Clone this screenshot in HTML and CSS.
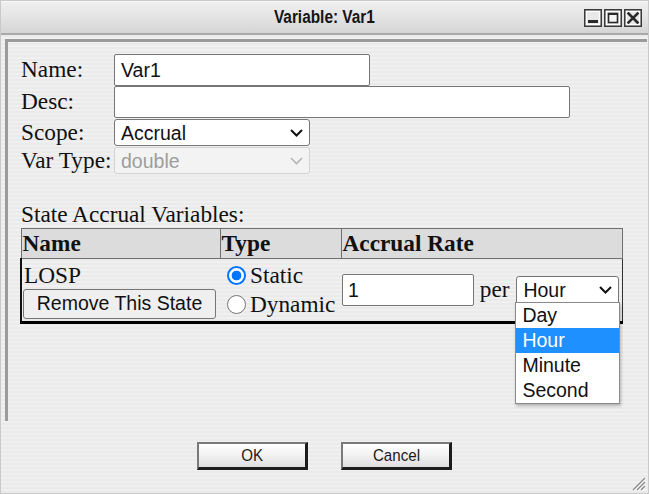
FILE: index.html
```html
<!DOCTYPE html>
<html>
<head>
<meta charset="utf-8">
<link rel="stylesheet" href="styles.css">
</head>
<body>
<div class="window">
  <div class="titlebar">
    <span></span>
    <span class="title">Variable: Var1</span>
    <svg class="controls" width="58" height="18" viewBox="0 0 58 18">
      <g>
        <rect x="0.75" y="0.75" width="16.5" height="16.5" fill="#e9e9e9" stroke="#3a3a3a" stroke-width="1.5"/>
        <rect x="2.5" y="2.5" width="13" height="13" fill="none" stroke="#ffffff" stroke-width="1"/>
        <rect x="4" y="11" width="10" height="3" fill="#2a2a2a"/>
      </g>
      <g transform="translate(20,0)">
        <rect x="0.75" y="0.75" width="16.5" height="16.5" fill="#e9e9e9" stroke="#3a3a3a" stroke-width="1.5"/>
        <rect x="2.5" y="2.5" width="13" height="13" fill="none" stroke="#ffffff" stroke-width="1"/>
        <rect x="4.5" y="4.5" width="9" height="9" fill="#f4f4f4" stroke="#2a2a2a" stroke-width="1.6"/>
        <rect x="4" y="4" width="10" height="2" fill="#2a2a2a"/>
      </g>
      <g transform="translate(40,0)">
        <rect x="0.75" y="0.75" width="16.5" height="16.5" fill="#e9e9e9" stroke="#3a3a3a" stroke-width="1.5"/>
        <rect x="2.5" y="2.5" width="13" height="13" fill="none" stroke="#ffffff" stroke-width="1"/>
        <path d="M4.5 4.5 L13.5 13.5 M13.5 4.5 L4.5 13.5" stroke="#2a2a2a" stroke-width="2.6" stroke-linecap="square"/>
      </g>
    </svg>
  </div>

  <div class="panel">
    <div class="form">
      <label class="lbl">Name:</label>
      <div class="field"><input class="txt name-in" type="text" value="Var1"></div>
      <label class="lbl">Desc:</label>
      <div class="field"><input class="txt desc-in" type="text" value=""></div>
      <label class="lbl">Scope:</label>
      <div class="field">
        <div class="sel sel-wide">
          <span class="sel-text">Accrual</span>
          <svg class="chev" width="13" height="8" viewBox="0 0 13 8"><path d="M1 1 L6.5 6.5 L12 1" fill="none" stroke="#111" stroke-width="2"/></svg>
        </div>
      </div>
      <label class="lbl">Var Type:</label>
      <div class="field">
        <div class="sel sel-wide sel-disabled">
          <span class="sel-text">double</span>
          <svg class="chev" width="13" height="8" viewBox="0 0 13 8"><path d="M1 1 L6.5 6.5 L12 1" fill="none" stroke="#b5b5b5" stroke-width="1.6"/></svg>
        </div>
      </div>
    </div>

    <div class="section">State Accrual Variables:</div>

    <table class="states">
      <colgroup>
        <col class="c-name">
        <col class="c-type">
        <col class="c-rate">
      </colgroup>
      <thead>
        <tr><th>Name</th><th>Type</th><th>Accrual Rate</th></tr>
      </thead>
      <tbody>
        <tr>
          <td class="td-name">
            <div class="state-name">LOSP</div>
            <button class="remove-btn" type="button">Remove This State</button>
          </td>
          <td class="td-type">
            <div class="opt"><span class="radio checked"></span><span>Static</span></div>
            <div class="opt"><span class="radio"></span><span>Dynamic</span></div>
          </td>
          <td class="td-rate">
            <input class="txt rate-in" type="text" value="1"> per <div class="sel sel-unit">
              <span class="sel-text">Hour</span>
              <svg class="chev" width="13" height="8" viewBox="0 0 13 8"><path d="M1 1 L6.5 6.5 L12 1" fill="none" stroke="#111" stroke-width="2"/></svg>
              <div class="dropdown">
                <div class="dd-item">Day</div>
                <div class="dd-item dd-active">Hour</div>
                <div class="dd-item">Minute</div>
                <div class="dd-item">Second</div>
              </div>
            </div>
          </td>
        </tr>
      </tbody>
    </table>
  </div>

  <div class="footer">
    <button class="dlg-btn" type="button"><span>OK</span></button>
    <button class="dlg-btn" type="button"><span>Cancel</span></button>
  </div>

  <svg class="grip" width="16" height="16" viewBox="0 0 16 16">
    <path d="M15 3 L3 15 M15 7 L7 15 M15 11 L11 15" stroke="#8a8a8a" stroke-width="1.3"/>
    <path d="M16 4 L4 16 M16 8 L8 16 M16 12 L12 16" stroke="#ffffff" stroke-width="0.8"/>
  </svg>
</div>
</body>
</html>
```

FILE: styles.css
```css
* { box-sizing: border-box; }

html, body {
  margin: 0;
  padding: 0;
}

body {
  width: 649px;
  height: 494px;
  overflow: hidden;
  background: #ffffff;
  font-family: "Liberation Serif", "Times New Roman", serif;
}

.window {
  position: relative;
  width: 649px;
  height: 494px;
  border: 1px solid #c9c9c9;
  background: repeating-linear-gradient(180deg, #f0f0f0 0 2px, #eaeaea 2px 4px);
  display: flex;
  flex-direction: column;
}

/* ---------- title bar ---------- */
.titlebar {
  height: 34px;
  flex: none;
  border-bottom: 2px solid #a9a9a9;
  border-top: 1px solid #f8f8f8;
  background: linear-gradient(180deg, #efefef 0%, #e2e2e2 55%, #d5d5d5 100%);
  display: grid;
  grid-template-columns: 1fr auto 1fr;
  align-items: center;
}

.title {
  font-family: "Liberation Sans", Arial, sans-serif;
  font-weight: bold;
  font-size: 17.5px;
  color: #151515;
  transform: scaleX(0.88);
  margin-top: -1px;
}

.controls {
  justify-self: end;
  margin-right: 6px;
  margin-top: 1px;
  display: block;
}

/* ---------- panel ---------- */
.panel {
  flex: none;
  height: 382px;
  margin: 4px 1px 0 4px;
  border-top: 3px solid #9b9b9b;
  border-left: 3px solid #9b9b9b;
  padding: 12px 12px 0 12px;
}

.form {
  display: grid;
  grid-template-columns: 94px auto;
  align-items: baseline;
  justify-content: start;
}

.lbl {
  font-size: 23.3px;
  line-height: 26.5px;
  color: #111;
  padding-left: 1px;
}

.field {
  display: flex;
  align-items: baseline;
}

.txt {
  font-family: "Liberation Sans", Arial, sans-serif;
  font-size: 19.5px;
  color: #111;
  height: 32px;
  border: 1px solid #767676;
  border-radius: 2px;
  background: #ffffff;
  padding: 0 6px;
  margin: 0;
  outline: none;
}

.name-in { width: 256px; }
.desc-in { width: 456px; }

.sel {
  position: relative;
  display: inline-flex;
  align-items: baseline;
  justify-content: space-between;
  height: 27px;
  padding: 2px 6px 0 6px;
  border: 1px solid #767676;
  border-radius: 3px;
  background: #ffffff;
  font-family: "Liberation Sans", Arial, sans-serif;
  font-size: 19.5px;
  line-height: 22px;
  color: #111;
  vertical-align: baseline;
}

.sel-wide {
  width: 196px;
  margin-top: 1px;
}

.chev {
  align-self: center;
  margin-top: -1px;
}

.sel-disabled {
  background: #f3f3f3;
  border-color: #d2d2d2;
  color: #9d9d9d;
}

/* ---------- states table ---------- */
.section {
  margin-top: 27px;
  font-size: 23.3px;
  line-height: 26.5px;
  color: #111;
  padding-left: 1px;
}

.states {
  width: 601px;
  table-layout: fixed;
  border-collapse: collapse;
  margin-top: 0;
  font-size: 23.3px;
  color: #111;
}

.c-name { width: 199px; }
.c-type { width: 121px; }
.c-rate { width: 281px; }

.states th {
  background: #dcdcdc;
  border: 1px solid #6f6f6f;
  text-align: left;
  font-weight: bold;
  padding: 1px 2px 1px 1px;
  line-height: 27.5px;
}

.states td {
  border-bottom: 3px solid #000;
  vertical-align: middle;
  padding: 2px 2px 2px 2px;
  line-height: 26.5px;
}

.states td.td-name {
  border-left: 2px solid #111;
  padding-left: 1px;
}

.states td.td-rate {
  border-right: 1px solid #333;
  padding-left: 1px;
  padding-right: 0;
  white-space: nowrap;
}

.state-name {
  line-height: 27px;
  padding-left: 1px;
}

.remove-btn {
  display: block;
  width: 193px;
  height: 30px;
  margin: 0;
  padding: 0;
  border: 1px solid #767676;
  border-radius: 3px;
  background: #efefef;
  font-family: "Liberation Sans", Arial, sans-serif;
  font-size: 19.5px;
  color: #111;
}

.td-type {
  padding-left: 7px !important;
}

.opt {
  display: flex;
  align-items: center;
  height: 29px;
  gap: 4px;
}

.radio {
  width: 19px;
  height: 19px;
  border-radius: 50%;
  border: 1.5px solid #767676;
  background: #ffffff;
  flex: none;
}

.radio.checked {
  border: 2px solid #0075ff;
  background: radial-gradient(circle, #0075ff 0 4.6px, #ffffff 5.2px);
}

.rate-in {
  width: 132px;
  height: 32px;
  padding-left: 5px;
  vertical-align: baseline;
}

.sel-unit {
  width: 103px;
  margin-left: 1px;
  border-radius: 3px 3px 0 0;
}

/* ---------- open dropdown list ---------- */
.dropdown {
  position: absolute;
  left: -2px;
  top: 25px;
  width: 105px;
  border: 1px solid #8a8a8a;
  background: #ffffff;
  box-shadow: 1px 2px 3px rgba(0, 0, 0, 0.25);
  z-index: 5;
}

.dd-item {
  height: 25px;
  line-height: 25px;
  padding-left: 6px;
  font-size: 19.5px;
  color: #111;
}

.dd-active {
  background: #1e90ff;
  color: #ffffff;
}

/* ---------- footer ---------- */
.footer {
  flex: 1;
  display: flex;
  justify-content: center;
  align-items: flex-start;
  gap: 33px;
  padding-top: 21px;
}

.dlg-btn {
  width: 111px;
  height: 28px;
  margin: 0;
  padding: 0;
  border-style: solid;
  border-width: 2px 3px 3px 2px;
  border-color: #7a7a7a #1c1c1c #1c1c1c #7a7a7a;
  background: linear-gradient(180deg, #ffffff 0%, #f3f3f3 45%, #dedede 100%);
  font-family: "Liberation Sans", Arial, sans-serif;
  font-size: 17px;
  color: #1a1a1a;
}

.dlg-btn span {
  display: inline-block;
  transform: scaleX(0.89);
}

.grip {
  position: absolute;
  right: 2px;
  bottom: 2px;
}
```
